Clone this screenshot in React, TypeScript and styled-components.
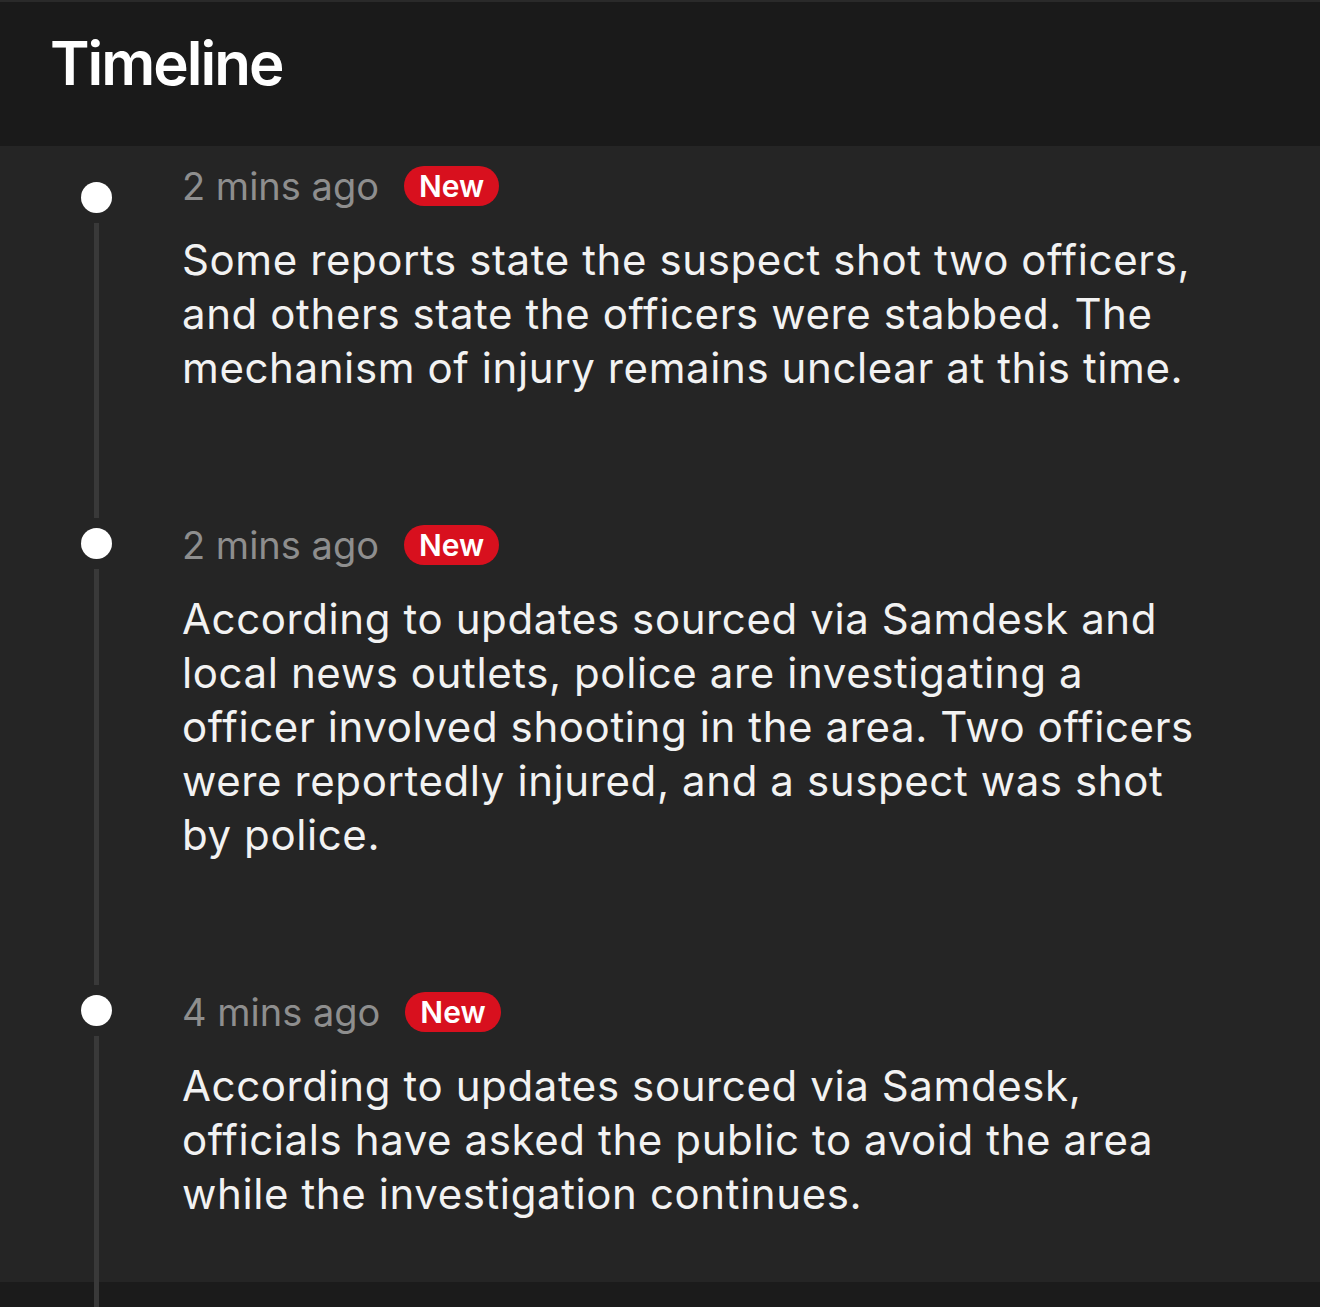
import React from "react";
import styled, { createGlobalStyle } from "styled-components";

const Global = createGlobalStyle`
  html, body { margin: 0; padding: 0; background: #1b1b1b; }
  body { font-family: Inter, "Noto Sans", "Liberation Sans", sans-serif; -webkit-font-smoothing: antialiased; }
`;

const Page = styled.div`
  width: 1320px;
  min-height: 1307px;
  background: #1b1b1b;
  display: flex;
  flex-direction: column;
`;

const Header = styled.header`
  height: 146px;
  border-top: 2px solid #2a2a2a;
  background: #1a1a1a;
  display: flex;
  align-items: flex-start;
  padding: 25px 0 0 50px;
  box-sizing: border-box;
`;

const Title = styled.h1`
  margin: 0;
  color: #ffffff;
  font-size: 60px;
  font-weight: 600;
  letter-spacing: -2px;
  line-height: 72px;
`;

const List = styled.section`
  background: #252525;
  display: flex;
  flex-direction: column;
`;

const Item = styled.article`
  display: flex;
  padding-left: 80px;
`;

const Rail = styled.div`
  width: 32px;
  display: flex;
  flex-direction: column;
  align-items: center;
  flex-shrink: 0;
`;

const Segment = styled.div<{ $height?: number; $hidden?: boolean }>`
  width: 5px;
  background: ${(p) => (p.$hidden ? "transparent" : "#393939")};
  ${(p) => (p.$height !== undefined ? `height: ${p.$height}px;` : "flex: 1;")}
`;

const Dot = styled.div`
  width: 31px;
  height: 31px;
  border-radius: 50%;
  background: #ffffff;
  margin: 10px 0;
  flex-shrink: 0;
`;

const Content = styled.div<{ $first?: boolean }>`
  flex: 1;
  padding: ${(p) => (p.$first ? "20px" : "69px")} 110px 61px 70px;
`;

const Meta = styled.div`
  display: flex;
  align-items: center;
  gap: 25px;
  height: 40px;
`;

const Time = styled.span`
  color: #8e8e8e;
  font-size: 38px;
  font-weight: 400;
`;

const Badge = styled.span`
  background: #d8101e;
  color: #ffffff;
  font-size: 30px;
  font-weight: 600;
  height: 40px;
  padding: 0 15px;
  border-radius: 20px;
  display: inline-flex;
  align-items: center;
`;

const Body = styled.p`
  margin: 27px 0 0;
  color: #f2f2f2;
  font-size: 42px;
  line-height: 54px;
  letter-spacing: 0.6px;
  font-weight: 400;
`;

const Footer = styled.div`
  flex: 1;
  display: flex;
  padding-left: 80px;
  background: #1b1b1b;
`;

const items = [
  {
    time: "2 mins ago",
    text: "Some reports state the suspect shot two officers, and others state the officers were stabbed. The mechanism of injury remains unclear at this time.",
  },
  {
    time: "2 mins ago",
    text: "According to updates sourced via Samdesk and local news outlets, police are investigating a officer involved shooting in the area. Two officers were reportedly injured, and a suspect was shot by police.",
  },
  {
    time: "4 mins ago",
    text: "According to updates sourced via Samdesk, officials have asked the public to avoid the area while the investigation continues.",
  },
];

export default function App() {
  return (
    <Page>
      <Global />
      <Header>
        <Title>Timeline</Title>
      </Header>
      <List>
        {items.map((it, i) => (
          <Item key={i}>
            <Rail>
              <Segment $height={i === 0 ? 26 : 62} $hidden={i === 0} />
              <Dot />
              <Segment />
            </Rail>
            <Content $first={i === 0}>
              <Meta>
                <Time>{it.time}</Time>
                <Badge>New</Badge>
              </Meta>
              <Body>{it.text}</Body>
            </Content>
          </Item>
        ))}
      </List>
      <Footer>
        <Rail>
          <Segment />
        </Rail>
      </Footer>
    </Page>
  );
}
